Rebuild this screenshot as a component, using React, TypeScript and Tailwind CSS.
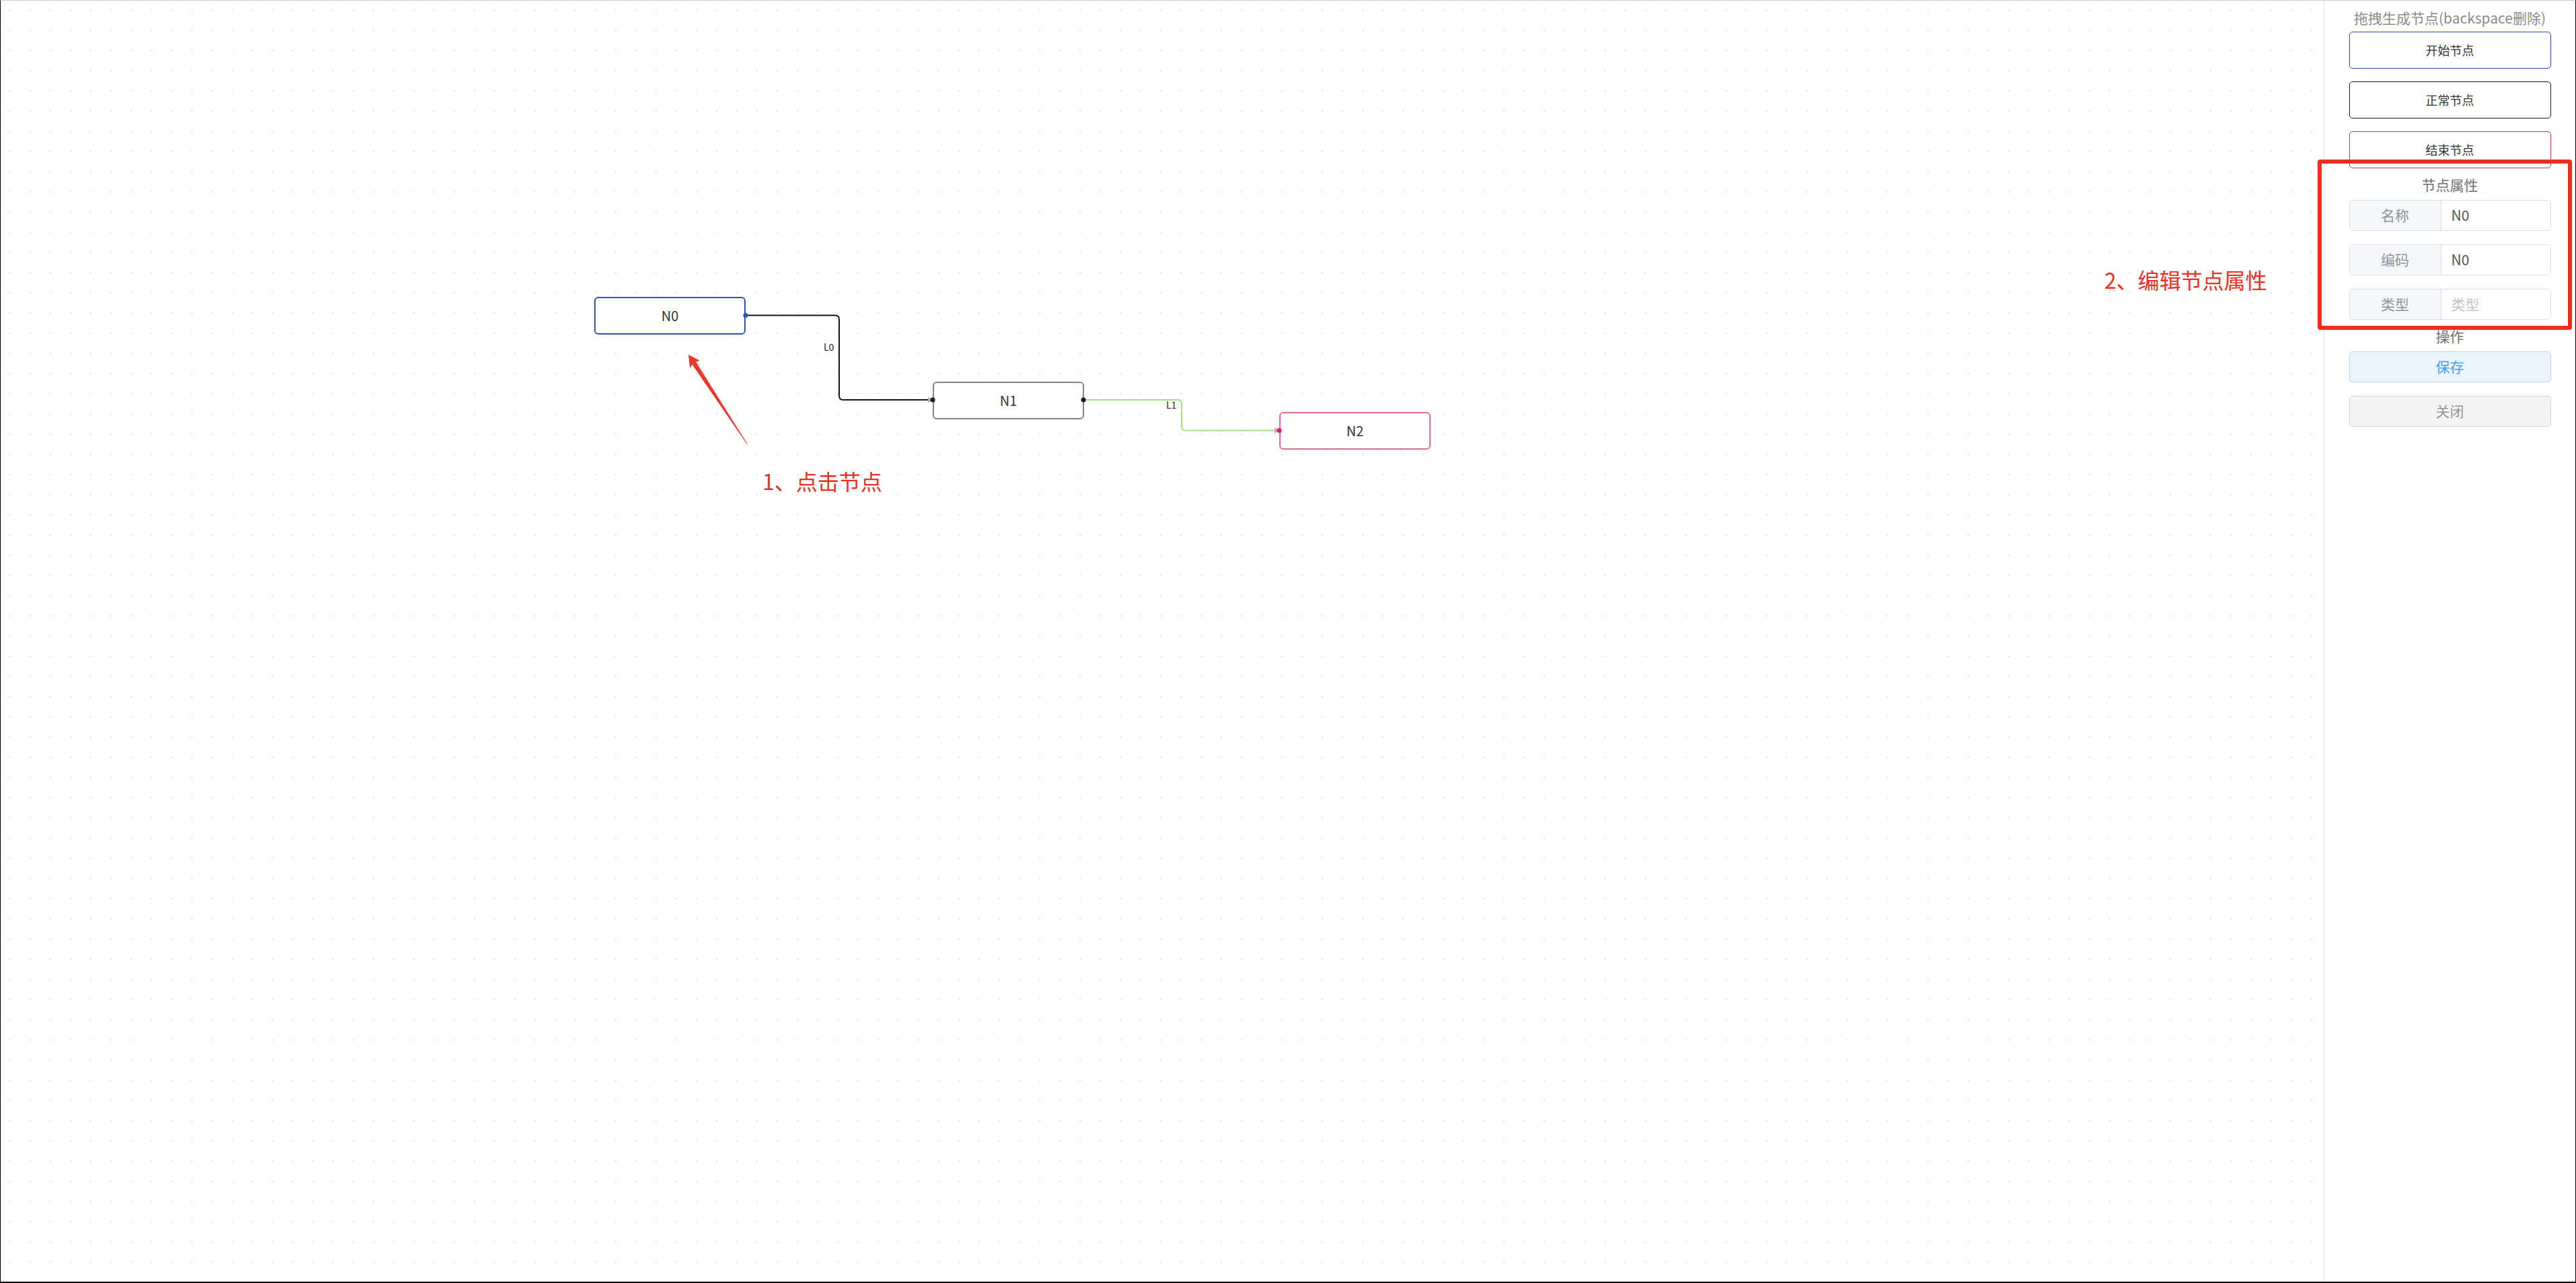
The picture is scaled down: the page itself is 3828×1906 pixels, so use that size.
import React from 'react';

type FlowNode = { id: string; x: number; y: number; border: string };

const nodes: FlowNode[] = [
  { id: 'N0', x: 882, y: 440, border: 'border-[#2f52c2]' },
  { id: 'N1', x: 1385, y: 566, border: 'border-[#818188]' },
  { id: 'N2', x: 1900, y: 611, border: 'border-[#dd6ba3]' },
];

const palette = [
  { label: '开始节点', border: 'border-[#2f4fae]' },
  { label: '正常节点', border: 'border-[#1a1a1a]' },
  { label: '结束节点', border: 'border-[#c92f83]' },
];

const fields = [
  { label: '名称', value: 'N0' },
  { label: '编码', value: 'N0' },
  { label: '类型', value: '' },
];

function Edges() {
  return (
    <svg
      className="pointer-events-none absolute left-0 top-0"
      width={3452}
      height={1903}
      viewBox="1 1 3452 1903"
    >
      {/* L0 */}
      <path
        d="M1108 468.5 H1241 Q1247 468.5 1247 474.5 V588 Q1247 594 1253 594 H1380"
        fill="none"
        stroke="#151515"
        strokeWidth={2}
      />
      <polygon points="1386,594 1379,589.5 1379,598.5" fill="#b4b4b4" />
      <text x={1224} y={521} fontSize={14} fill="#222" fontFamily="Noto Sans CJK SC, sans-serif">
        L0
      </text>
      {/* L1 */}
      <path
        d="M1610 594 H1750 Q1756 594 1756 600 V633.5 Q1756 639.5 1762 639.5 H1895"
        fill="none"
        stroke="#a9da8e"
        strokeWidth={2}
      />
      <polygon points="1901,639.5 1894,635 1894,644" fill="#b4b4b4" />
      <text x={1733} y={607} fontSize={14} fill="#222" fontFamily="Noto Sans CJK SC, sans-serif">
        L1
      </text>
      {/* ports */}
      <circle cx={1108} cy={468.5} r={3.6} fill="#2f52c2" />
      <circle cx={1386} cy={594} r={3.6} fill="#1c1c2a" />
      <circle cx={1610} cy={594} r={3.6} fill="#1c1c2a" />
      <circle cx={1901} cy={639.5} r={3.6} fill="#ea1668" />
    </svg>
  );
}

function ClickArrow() {
  return (
    <svg className="pointer-events-none absolute left-0 top-0" width={3452} height={1903} viewBox="1 1 3452 1903">
      <polygon
        points="1023,527 1039.5,535.5 1034.2,537.8 1110.6,659.5 1109.8,659.8 1028.6,541.4 1025.2,547"
        fill="#f2352a"
      />
    </svg>
  );
}

export default function App() {
  return (
    <div className="relative flex h-[1906px] w-full border-x border-b-2 border-t border-x-black border-b-black border-t-[#c9c9c9] bg-white font-['Noto_Sans_CJK_SC',sans-serif]">
      <div className="relative flex-1 bg-[radial-gradient(circle,#e2e2e2_1.1px,transparent_1.5px)] bg-[size:30px_30px] bg-[position:-1px_-1px]">
        {nodes.map(node => (
          <div
            key={node.id}
            className={`absolute flex h-[56px] w-[225px] items-center justify-center rounded-[6px] border-2 bg-white text-[20px] text-[#333] ${node.border}`}
            style={{ left: node.x, top: node.y }}
          >
            {node.id}
          </div>
        ))}
        <Edges />
        <ClickArrow />
        <div className="absolute left-[1132px] top-[697px] whitespace-nowrap text-[32px] leading-[32px] text-[#ee2e25]">
          1、点击节点
        </div>
        <div className="absolute left-[3126px] top-[398px] whitespace-nowrap text-[32px] leading-[32px] text-[#ee2e25]">
          2、编辑节点属性
        </div>
      </div>

      <aside className="flex w-[374px] flex-col items-center border-l border-[#e6e6e6] pt-[10px]">
        <div className="text-[21px] leading-[30px] text-[#8a8a8a]">拖拽生成节点(backspace删除)</div>

        <div className="mt-[6px] flex flex-col gap-[19px]">
          {palette.map(item => (
            <div
              key={item.label}
              className={`flex h-[55px] w-[300px] items-center justify-center rounded-[5px] border bg-white text-[18px] text-[#333] ${item.border}`}
            >
              {item.label}
            </div>
          ))}
        </div>

        <div className="mt-[9px] text-[21px] leading-[30px] text-[#707070]">节点属性</div>

        <div className="mt-[8px] flex flex-col gap-[20px]">
          {fields.map(field => (
            <div
              key={field.label}
              className="flex h-[46px] w-[300px] overflow-hidden rounded-[5px] border border-[#dcdfe6] text-[21px]"
            >
              <div className="flex w-[136px] items-center justify-center border-r border-[#dcdfe6] bg-[#f5f7fa] text-[#909399]">
                {field.label}
              </div>
              <input
                className="min-w-0 flex-1 bg-white px-[15px] text-[#555] outline-none placeholder:text-[#c0c4cc]"
                defaultValue={field.value}
                placeholder={field.label}
              />
            </div>
          ))}
        </div>

        <div className="mt-[9px] text-[21px] leading-[30px] text-[#707070]">操作</div>

        <div className="mt-[8px] flex flex-col gap-[20px]">
          <button className="h-[46px] w-[300px] rounded-[5px] border border-[#b3d8ff] bg-[#ecf5ff] text-[21px] text-[#409eff]">
            保存
          </button>
          <button className="h-[46px] w-[300px] rounded-[5px] border border-[#d3d4d6] bg-[#f4f4f5] text-[21px] text-[#909399]">
            关闭
          </button>
        </div>
      </aside>

      {/* annotation frame */}
      <div className="pointer-events-none absolute left-[3443px] top-[236px] h-[253px] w-[378px] rounded-[4px] border-[6px] border-[#f42c1d]" />
    </div>
  );
}
